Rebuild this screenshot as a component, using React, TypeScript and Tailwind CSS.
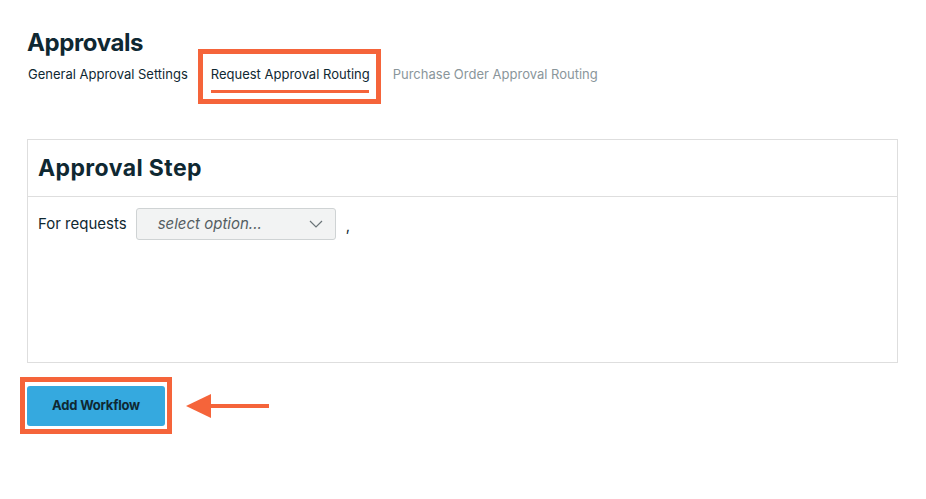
import React from "react";

export default function App() {
  return (
    <div className="w-[926px] h-[499px] bg-white text-[#0f2832]" style={{ fontFamily: "Inter, Lato, sans-serif" }}>
      <div className="pl-[27px] pt-[28px]">
        <h1 className="text-[24px] font-bold leading-[30px] tracking-[-0.4px]">Approvals</h1>
        <div className="flex items-center mt-[-9px] h-[55px]">
          <span className="text-[13px] ml-[1px] mr-[10px] mt-[-3px]">General Approval Settings</span>
          <div className="border-[5px] border-[#f5643a] h-[55px] pl-[8px] pr-[6px] flex flex-col pt-[11px]">
            <span className="text-[13px] leading-[18px]">Request Approval Routing</span>
            <div className="h-[3px] bg-[#f5643a] mt-[7px] mr-[1px]"></div>
          </div>
          <span className="text-[13px] ml-[12px] mt-[-3px] text-[#8a969b]">Purchase Order Approval Routing</span>
        </div>
        <div className="mt-[35px] w-[871px] h-[224px] border border-[#dedede] flex flex-col">
          <div className="h-[57px] border-b border-[#dedede] flex items-center pl-[10px]">
            <h2 className="text-[23px] font-bold tracking-[0.4px]">Approval Step</h2>
          </div>
          <div className="flex items-center pl-[10px] pt-[11px]">
            <span className="text-[15px] mr-[9px]">For requests</span>
            <div className="w-[200px] h-[32px] bg-[#f2f3f3] border border-[#cfd3d4] rounded-[3px] flex items-center justify-between pl-[21px] pr-[12px]">
              <span className="text-[15px] italic text-[#555e62]">select option...</span>
              <svg width="14" height="8" viewBox="0 0 14 8" fill="none">
                <path d="M1 1l6 6 6-6" stroke="#6b7478" strokeWidth="1.2" />
              </svg>
            </div>
            <span className="ml-[10px] text-[15px] mt-[4px]">,</span>
          </div>
        </div>
        <div className="mt-[14px] flex items-center ml-[-7px]">
          <div className="border-[5px] border-[#f5643a] px-[2px] pt-[4px] pb-[3px]">
            <button className="w-[138px] h-[40px] bg-[#35a9df] rounded-[3px] text-[13px] font-bold text-[#0f2832] tracking-[-0.2px]">
              Add Workflow
            </button>
          </div>
          <svg width="84" height="26" viewBox="0 0 84 26" className="ml-[14px]">
            <polygon points="0,13 25,1 25,25" fill="#f5643a" />
            <rect x="20" y="11" width="63" height="4" fill="#f5643a" />
          </svg>
        </div>
      </div>
    </div>
  );
}
